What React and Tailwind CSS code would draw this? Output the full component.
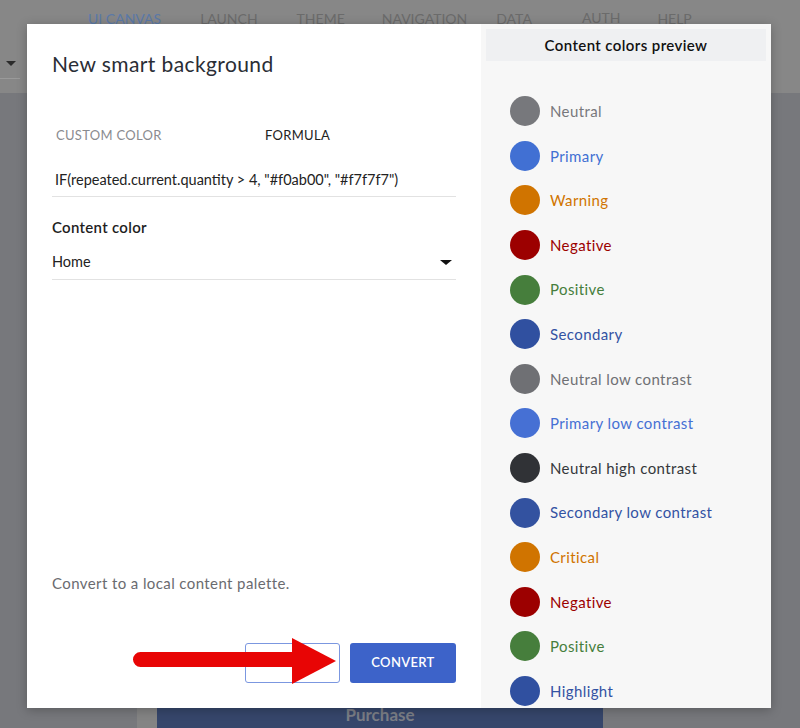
import { useState } from 'react'

const swatches = [
  { name: 'Neutral', dot: '#77787c', text: '#77787c' },
  { name: 'Primary', dot: '#4170d3', text: '#4170d3' },
  { name: 'Warning', dot: '#d07400', text: '#d07400' },
  { name: 'Negative', dot: '#9c0000', text: '#9c0000' },
  { name: 'Positive', dot: '#467e3c', text: '#467e3c' },
  { name: 'Secondary', dot: '#3050a0', text: '#3352a3' },
  { name: 'Neutral low contrast', dot: '#6f7074', text: '#6f7074' },
  { name: 'Primary low contrast', dot: '#4670d4', text: '#4670d4' },
  { name: 'Neutral high contrast', dot: '#303236', text: '#35373b' },
  { name: 'Secondary low contrast', dot: '#3352a0', text: '#3352a3' },
  { name: 'Critical', dot: '#d07400', text: '#d07400' },
  { name: 'Negative', dot: '#9c0000', text: '#9c0000' },
  { name: 'Positive', dot: '#467e3c', text: '#467e3c' },
  { name: 'Highlight', dot: '#3050a0', text: '#3352a3' },
]

export default function App() {
  const [tab, setTab] = useState('formula')

  return (
    <div className="relative w-[800px] h-[728px] overflow-hidden bg-[#77787c] font-['Lato',sans-serif]">
      {/* Dimmed page behind the dialog */}
      <div className="h-[93px] bg-[#878787] relative">
        <div className="flex items-center pt-[8px] pl-[88px] text-[14px] text-[#6b6b6b] uppercase">
          <span className="text-[#5b79a8]">UI Canvas</span>
          <span className="ml-[39px]">Launch</span>
          <span className="ml-[39px]">Theme</span>
          <span className="ml-[37px]">Navigation</span>
          <span className="ml-[29px]">Data</span>
          <span className="ml-[50px] -mt-[3px]">Auth</span>
          <span className="ml-[37px]">Help</span>
        </div>
        <div className="mt-[32px] w-[20px] border-b border-[#9a9a9a] pb-[12px] pl-[6px]">
          <div className="w-0 h-0 border-l-[5px] border-r-[5px] border-t-[5px] border-l-transparent border-r-transparent border-t-[#2b2b2b]" />
        </div>
      </div>
      <div className="absolute left-[137px] bottom-0 w-[20px] h-[20px] bg-[#848484]" />
      <div className="absolute left-[157px] bottom-0 w-[446px] h-[20px] bg-[#36466b] flex justify-center text-[17px] leading-[14px] font-bold text-[#7b7e86]">
        Purchase
      </div>

      {/* Dialog */}
      <div className="absolute left-[27px] top-[24px] w-[744px] h-[684px] bg-white flex shadow-[0_2px_10px_rgba(0,0,0,0.25)]">
        <div className="w-[454px] pl-[25px] pt-[28px]">
          <h2 className="text-[21px] leading-6 tracking-[0.4px] text-[#2a2d35]">New smart background</h2>

          <div className="mt-[51px] flex text-[13px] leading-4 pl-[4px]">
            <button onClick={() => setTab('custom')} className={`w-[209px] text-left uppercase tracking-[0.3px] ${tab === 'custom' ? 'text-[#222]' : 'text-[#8a8b8f]'}`}>
              Custom color
            </button>
            <button onClick={() => setTab('formula')} className={`text-left uppercase tracking-[0.3px] ${tab === 'formula' ? 'text-[#222]' : 'text-[#8a8b8f]'}`}>
              Formula
            </button>
          </div>

          <div className="mt-[27px] w-[404px] border-b border-[#e2e2e2] pb-[6px] pl-[3px] text-[14.5px] leading-5 text-[#222]">
            IF(repeated.current.quantity &gt; 4, "#f0ab00", "#f7f7f7")
          </div>

          <div className="mt-[20px] text-[15px] leading-5 tracking-[0.3px] font-semibold text-[#1e1e1e]">Content color</div>
          <div className="mt-[15px] w-[404px] border-b border-[#e2e2e2] pb-[7px] flex items-center justify-between text-[14.5px] leading-5 text-[#222]">
            <span>Home</span>
            <div className="mr-[4px] w-0 h-0 border-l-[6px] border-r-[6px] border-t-[5px] border-l-transparent border-r-transparent border-t-[#111]" />
          </div>

          <p className="mt-[293px] text-[15px] leading-5 tracking-[0.4px] text-[#6a6b6f]">Convert to a local content palette.</p>

          <div className="mt-[50px] w-[404px] flex justify-end gap-[10px]">
            <button className="w-[95px] h-[40px] rounded-[3px] border border-[#7b97e0] bg-white" />
            <button className="w-[106px] h-[40px] rounded-[3px] bg-[#3d63c9] text-white text-[13px] font-semibold tracking-wide">
              CONVERT
            </button>
          </div>
        </div>

        <div className="flex-1 bg-[#f7f7f7] p-[5px]">
          <div className="h-[32px] bg-[#eff0f2] flex items-center justify-center text-[15px] tracking-[0.4px] font-semibold text-[#111]">
            Content colors preview
          </div>
          <div className="mt-[28px] pl-[24px]">
            {swatches.map((s, i) => (
              <div key={i} className="h-[44.6px] flex items-center gap-[10px]">
                <span className="w-[30px] h-[30px] rounded-full shrink-0" style={{ backgroundColor: s.dot }} />
                <span className="text-[15px] tracking-[0.4px]" style={{ color: s.text }}>{s.name}</span>
              </div>
            ))}
          </div>
        </div>
      </div>

      {/* Annotation arrow */}
      <svg className="absolute left-[130px] top-[636px]" width="210" height="50" viewBox="0 0 210 50">
        <path d="M10.5 16 H165 V31 H10.5 A7.5 7.5 0 0 1 10.5 16 Z" fill="#e80505" />
        <polygon points="162,2 206,25 162,48" fill="#e80505" />
      </svg>
    </div>
  )
}
